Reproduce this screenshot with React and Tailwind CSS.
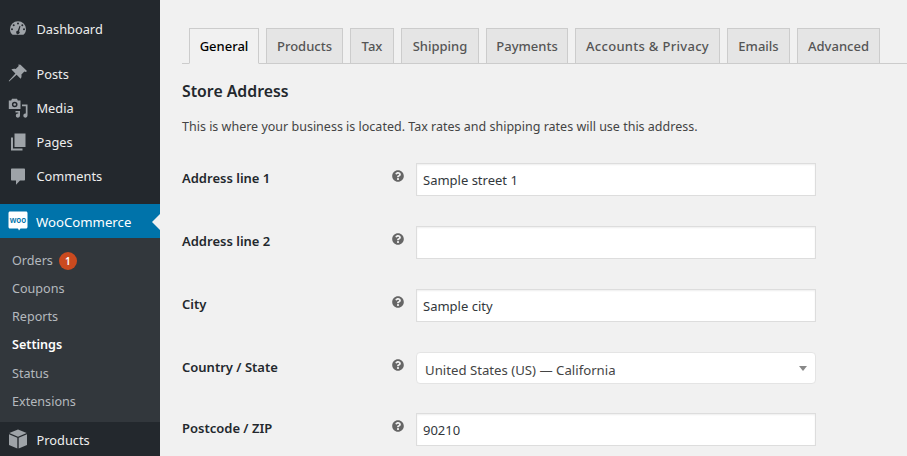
import { FaQuestionCircle } from "react-icons/fa";

const font = { fontFamily: '"Noto Sans", sans-serif' };

const DashIcon = () => (
  <svg viewBox="0 0 20 20" className="w-[20px] h-[20px] fill-[#9ea3a8]">
    <path fillRule="evenodd" d="M10 2.200a8 8 0 0 0-8 8c0 2.300 1 4.300 2.600 5.600h10.800c1.600-1.300 2.600-3.300 2.600-5.600a8 8 0 0 0-8-8zM10 3.500a1 1 0 1 1 0 2 1 1 0 0 1 0-2zM5.700 5.300a1 1 0 1 1 0 2 1 1 0 0 1 0-2zM14.300 5.300a1 1 0 1 1 0 2 1 1 0 0 1 0-2zM4 9.300a1 1 0 1 1 0 2 1 1 0 0 1 0-2zM16 9.300a1 1 0 1 1 0 2 1 1 0 0 1 0-2zM11.600 6.800l.9.4-1.400 5a1.700 1.700 0 1 1-1.400-.4z" />
  </svg>
);

const PinIcon = () => (
  <svg viewBox="0 0 20 20" className="w-[20px] h-[20px] fill-[#9ea3a8]">
    <path d="M12.500 .800l6.500 6.200-1.100 1-1.500-.5-3 3c.4 1.800 0 3.300-.8 4.300L8.600 10.800 1.200 17.500l-.5-.5 6.700-7.400-4-4C4.400 4.800 5.900 4.500 7.700 4.900l3-3-.4-1.400z" />
  </svg>
);

const MediaIcon = () => (
  <svg viewBox="0 0 20 20" className="w-[20px] h-[20px] fill-[#9ea3a8]">
    <path fillRule="evenodd" d="M4 .800h5l.8 1.700h2.700v8.500H.800V2.500H3.200zM6.700 3.700a2.800 2.800 0 1 0 0 5.600 2.800 2.800 0 0 0 0-5.600z" />
    <circle cx="6.700" cy="6.500" r="1.300" />
    <path d="M14 6.500h5.500v11a2.100 2.100 0 1 1-1.700-2V8.200H14zM7.500 13h4.500v4.500a2.100 2.100 0 1 1-1.700-2v-.9H7.500z" />
  </svg>
);

const PagesIcon = () => (
  <svg viewBox="0 0 20 20" className="w-[20px] h-[20px] fill-[#9ea3a8]">
    <path d="M6.500 1.500h11v13.500h-11z" />
    <path d="M3 5.500h2v11h9.500v2H3z" />
  </svg>
);

const CommentIcon = () => (
  <svg viewBox="0 0 20 20" className="w-[20px] h-[20px] fill-[#9ea3a8]">
    <path d="M4 2.500h12c.6 0 1 .4 1 1v10c0 .6-.4 1-1 1H12L8 18.800v-4.300H4c-.6 0-1-.4-1-1v-10c0-.6.4-1 1-1z" />
  </svg>
);

const BoxIcon = () => (
  <svg viewBox="0 0 20 20" className="w-[20px] h-[20px] fill-[#9ea3a8]">
    <path d="M10 .500l8.700 3.500L10 7.700 1.300 4z" />
    <path d="M1 5.200l8.300 3.600v10.700L1 16z" />
    <path d="M19 5.200l-8.300 3.600v10.700L19 16z" />
  </svg>
);

const WooIcon = () => (
  <svg viewBox="0 0 20 20" className="w-[20px] h-[20px]">
    <path fill="#fff" d="M2 .500h16c.8 0 1.500.7 1.500 1.500v14c0 .8-.7 1.500-1.500 1.500h-5.500L11 19.500 10 17.500H2C1.200 17.500.500 16.800.500 16V2C.500 1.200 1.200.500 2 .500z" />
    <text x="10" y="11.800" textAnchor="middle" fontSize="8" fontWeight="600" fill="#0073aa" fontFamily="Noto Sans">woo</text>
  </svg>
);

const menuTop = [
  { label: "Posts", icon: <PinIcon /> },
  { label: "Media", icon: <MediaIcon /> },
  { label: "Pages", icon: <PagesIcon /> },
  { label: "Comments", icon: <CommentIcon /> },
];

const MenuRow = ({ icon, label, textClass = "pt-[2px]" }) => (
  <div className="h-[34px] flex items-center pl-[8px] text-[12.8px] text-[#eee]">
    <span className="w-[28.500px] shrink-0 flex">{icon}</span>
    <span className={textClass}>{label}</span>
  </div>
);

const tabs = [
  { label: "General", w: "w-[70px]" },
  { label: "Products", w: "w-[77px]" },
  { label: "Tax", w: "w-[44px]" },
  { label: "Shipping", w: "w-[78px]" },
  { label: "Payments", w: "w-[82px]" },
  { label: "Accounts & Privacy", w: "w-[145px] tracking-[0.3px]" },
  { label: "Emails", w: "w-[63px]" },
  { label: "Advanced", w: "w-[83px]" },
];

const HelpIcon = () => (
  <span className="w-[24px] shrink-0 pt-[7px] flex">
    <FaQuestionCircle className="text-[12px] text-[#666]" />
  </span>
);

const Field = ({ label, value, className }) => (
  <div className={"flex items-start " + className}>
    <label className="w-[210px] shrink-0 pt-[6px] text-[13px] font-semibold text-[#23282d]">{label}</label>
    <HelpIcon />
    <div className="w-[400px] h-[33px] bg-white border border-[#ddd] shadow-[inset_0_1px_2px_rgba(0,0,0,0.07)] flex items-center pl-[6px] pt-[2px] text-[13px] text-[#32373c]">
      {value}
    </div>
  </div>
);

export default function App() {
  return (
    <div style={font} className="w-[907px] h-[456px] flex overflow-hidden bg-[#f1f1f1]">
      <aside className="w-[160px] shrink-0 bg-[#23282d] pt-[12px] flex flex-col">
        <MenuRow icon={<DashIcon />} label="Dashboard" />
        <div className="h-[11px]" />
        {menuTop.map((m) => (
          <MenuRow key={m.label} icon={m.icon} label={m.label} />
        ))}
        <div className="h-[11px]" />
        <div className="relative h-[34px] bg-[#0073aa] flex items-center pl-[8px] text-[13.2px] text-white">
          <span className="w-[28px] shrink-0 flex"><WooIcon /></span>
          <span className="pt-[3px]">WooCommerce</span>
          <span className="absolute right-0 top-[10px] border-y-[8px] border-y-transparent border-r-[8px] border-r-[#f1f1f1]" />
        </div>
        <div className="bg-[#32373c] h-[184px] pt-[9px] pl-[12px] text-[12.6px] text-[#b4b9be]">
          <div className="h-[28px] flex items-center">
            Orders
            <span className="ml-[6px] w-[18px] h-[18px] rounded-full bg-[#ca4a1f] text-white text-[10px] font-semibold flex items-center justify-center">1</span>
          </div>
          <div className="h-[28px] flex items-center">Coupons</div>
          <div className="h-[28px] flex items-center">Reports</div>
          <div className="h-[29px] flex items-center text-white font-semibold">Settings</div>
          <div className="h-[28px] flex items-center">Status</div>
          <div className="h-[28px] flex items-center">Extensions</div>
        </div>
        <MenuRow icon={<BoxIcon />} label="Products" textClass="pt-[4px]" />
      </aside>
      <main className="flex-1 pl-[22px] pt-[28px]">
        <div className="flex border-b border-[#ccc] h-[36px] pl-[7px] gap-[7px]">
          {tabs.map((t, i) => (
            <div
              key={t.label}
              className={
                "h-[36px] border border-[#ccc] pt-[2px] text-[13px] font-medium whitespace-nowrap flex items-center justify-center " +
                t.w + " " +
                (i === 0 ? "bg-[#f1f1f1] border-b-[#f1f1f1] text-black" : "bg-[#e5e5e5] text-[#555]")
              }
            >
              {t.label}
            </div>
          ))}
        </div>
        <h2 className="mt-[15px] text-[15.800px] font-semibold text-[#23282d] leading-[24px]">Store Address</h2>
        <p className="mt-[14px] text-[12.500px] text-[#444] leading-[20px]">
          This is where your business is located. Tax rates and shipping rates will use this address.
        </p>
        <Field className="mt-[26px]" label="Address line 1" value="Sample street 1" />
        <Field className="mt-[30px]" label="Address line 2" value="" />
        <Field className="mt-[30px]" label="City" value="Sample city" />
        <div className="mt-[30px] flex items-start">
          <label className="w-[210px] shrink-0 pt-[6px] text-[13px] font-semibold text-[#23282d]">Country / State</label>
          <HelpIcon />
          <div className="w-[400px] h-[32px] bg-white border border-[#e4e4e4] rounded-[4px] flex items-center justify-between px-[8px] text-[13.200px] text-[#444]">
            <span className="pt-[6px]">United States (US) — California</span>
            <span className="border-x-[4px] border-x-transparent border-t-[5px] border-t-[#888]" />
          </div>
        </div>
        <Field className="mt-[29px]" label="Postcode / ZIP" value="90210" />
      </main>
    </div>
  );
}
